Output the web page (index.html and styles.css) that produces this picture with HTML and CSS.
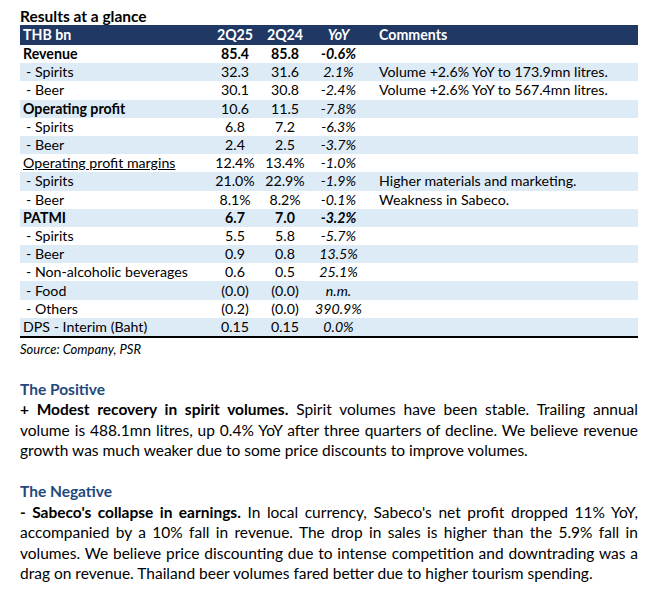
FILE: index.html
```html
<!DOCTYPE html>
<html>
<head>
<meta charset="utf-8">
<link rel="stylesheet" href="styles.css">
</head>
<body>
<div class="page">
  <h1 class="title">Results at a glance</h1>
  <table class="results">
    <colgroup>
      <col class="c-label"><col class="c-num"><col class="c-num2"><col class="c-yoy"><col class="c-comment">
    </colgroup>
    <thead>
      <tr><th class="lbl">THB bn</th><th>2Q25</th><th>2Q24</th><th class="yoy">YoY</th><th class="cmt">Comments</th></tr>
    </thead>
    <tbody>
      <tr class="bold"><td class="lbl">Revenue</td><td>85.4</td><td>85.8</td><td class="yoy">-0.6%</td><td class="cmt"></td></tr>
      <tr class="alt"><td class="lbl sub">- Spirits</td><td>32.3</td><td>31.6</td><td class="yoy">2.1%</td><td class="cmt">Volume +2.6% YoY to 173.9mn litres.</td></tr>
      <tr><td class="lbl sub">- Beer</td><td>30.1</td><td>30.8</td><td class="yoy">-2.4%</td><td class="cmt">Volume +2.6% YoY to 567.4mn litres.</td></tr>
      <tr class="alt"><td class="lbl strong">Operating profit</td><td>10.6</td><td>11.5</td><td class="yoy">-7.8%</td><td class="cmt"></td></tr>
      <tr><td class="lbl sub">- Spirits</td><td>6.8</td><td>7.2</td><td class="yoy">-6.3%</td><td class="cmt"></td></tr>
      <tr class="alt"><td class="lbl sub">- Beer</td><td>2.4</td><td>2.5</td><td class="yoy">-3.7%</td><td class="cmt"></td></tr>
      <tr><td class="lbl under">Operating profit margins</td><td>12.4%</td><td>13.4%</td><td class="yoy">-1.0%</td><td class="cmt"></td></tr>
      <tr class="alt"><td class="lbl sub">- Spirits</td><td>21.0%</td><td>22.9%</td><td class="yoy">-1.9%</td><td class="cmt">Higher materials and marketing.</td></tr>
      <tr><td class="lbl sub">- Beer</td><td>8.1%</td><td>8.2%</td><td class="yoy">-0.1%</td><td class="cmt">Weakness in Sabeco.</td></tr>
      <tr class="alt bold"><td class="lbl">PATMI</td><td>6.7</td><td>7.0</td><td class="yoy">-3.2%</td><td class="cmt"></td></tr>
      <tr><td class="lbl sub">- Spirits</td><td>5.5</td><td>5.8</td><td class="yoy">-5.7%</td><td class="cmt"></td></tr>
      <tr class="alt"><td class="lbl sub">- Beer</td><td>0.9</td><td>0.8</td><td class="yoy">13.5%</td><td class="cmt"></td></tr>
      <tr><td class="lbl sub">- Non-alcoholic beverages</td><td>0.6</td><td>0.5</td><td class="yoy">25.1%</td><td class="cmt"></td></tr>
      <tr class="alt"><td class="lbl sub">- Food</td><td>(0.0)</td><td>(0.0)</td><td class="yoy">n.m.</td><td class="cmt"></td></tr>
      <tr><td class="lbl sub">- Others</td><td>(0.2)</td><td>(0.0)</td><td class="yoy">390.9%</td><td class="cmt"></td></tr>
      <tr class="alt last"><td class="lbl">DPS - Interim (Baht)</td><td>0.15</td><td>0.15</td><td class="yoy">0.0%</td><td class="cmt"></td></tr>
    </tbody>
  </table>
  <p class="source">Source: Company, PSR</p>

  <h2 class="section">The Positive</h2>
  <p class="body"><b>+ Modest recovery in spirit volumes.</b> Spirit volumes have been stable. Trailing annual volume is 488.1mn litres, up 0.4% YoY after three quarters of decline. We believe revenue growth was much weaker due to some price discounts to improve volumes.</p>

  <h2 class="section gap">The Negative</h2>
  <p class="body"><b>- Sabeco's collapse in earnings.</b> In local currency, Sabeco's net profit dropped 11% YoY, accompanied by a 10% fall in revenue. The drop in sales is higher than the 5.9% fall in volumes. We believe price discounting due to intense competition and downtrading was a drag on revenue. Thailand beer volumes fared better due to higher tourism spending.</p>
</div>
</body>
</html>
```

FILE: styles.css
```css
* { box-sizing: border-box; }
html, body { margin: 0; padding: 0; background: #ffffff; }
body {
  font-family: Lato, "Liberation Sans", sans-serif;
  color: #000;
}
.page {
  width: 650px;
  padding: 7px 12px 0 20px;
}
.title {
  margin: 0;
  font-size: 15.5px;
  line-height: 18px;
  font-weight: bold;
}
.results {
  width: 618px;
  border-collapse: collapse;
  table-layout: fixed;
  font-size: 14.2px;
  border-bottom: 2px solid #000;
}
.c-label { width: 191px; }
.c-num { width: 48px; }
.c-num2 { width: 52px; }
.c-yoy { width: 55px; }
.c-comment { width: 272px; }
.results th {
  background: #1f3864;
  color: #fff;
  font-weight: bold;
  height: 20px;
  padding: 0;
  text-align: center;
  line-height: 20px;
  white-space: nowrap;
}
.results td {
  height: 18.2px;
  line-height: 18px;
  padding: 0;
  text-align: center;
  white-space: nowrap;
}
.results .lbl { text-align: left; padding-left: 3px; }
.results .lbl.sub { padding-left: 6px; }
.results .yoy { font-style: italic; }
.results .cmt { text-align: left; padding-left: 13px; }
.results tr.alt td { background: #ddebf7; }
.results tr.bold td { font-weight: bold; }
.results .strong { font-weight: bold; }
.results .under { text-decoration: underline; }
.source {
  margin: 3px 0 0;
  font-size: 13px;
  line-height: 16px;
  font-style: italic;
}
.section {
  margin: 22px 0 0;
  font-size: 15.5px;
  line-height: 20.5px;
  font-weight: bold;
  color: #1f497d;
}
.section.gap { margin-top: 20.5px; }
.body {
  margin: 0;
  font-size: 15.5px;
  line-height: 20.5px;
  text-align: justify;
}
```
